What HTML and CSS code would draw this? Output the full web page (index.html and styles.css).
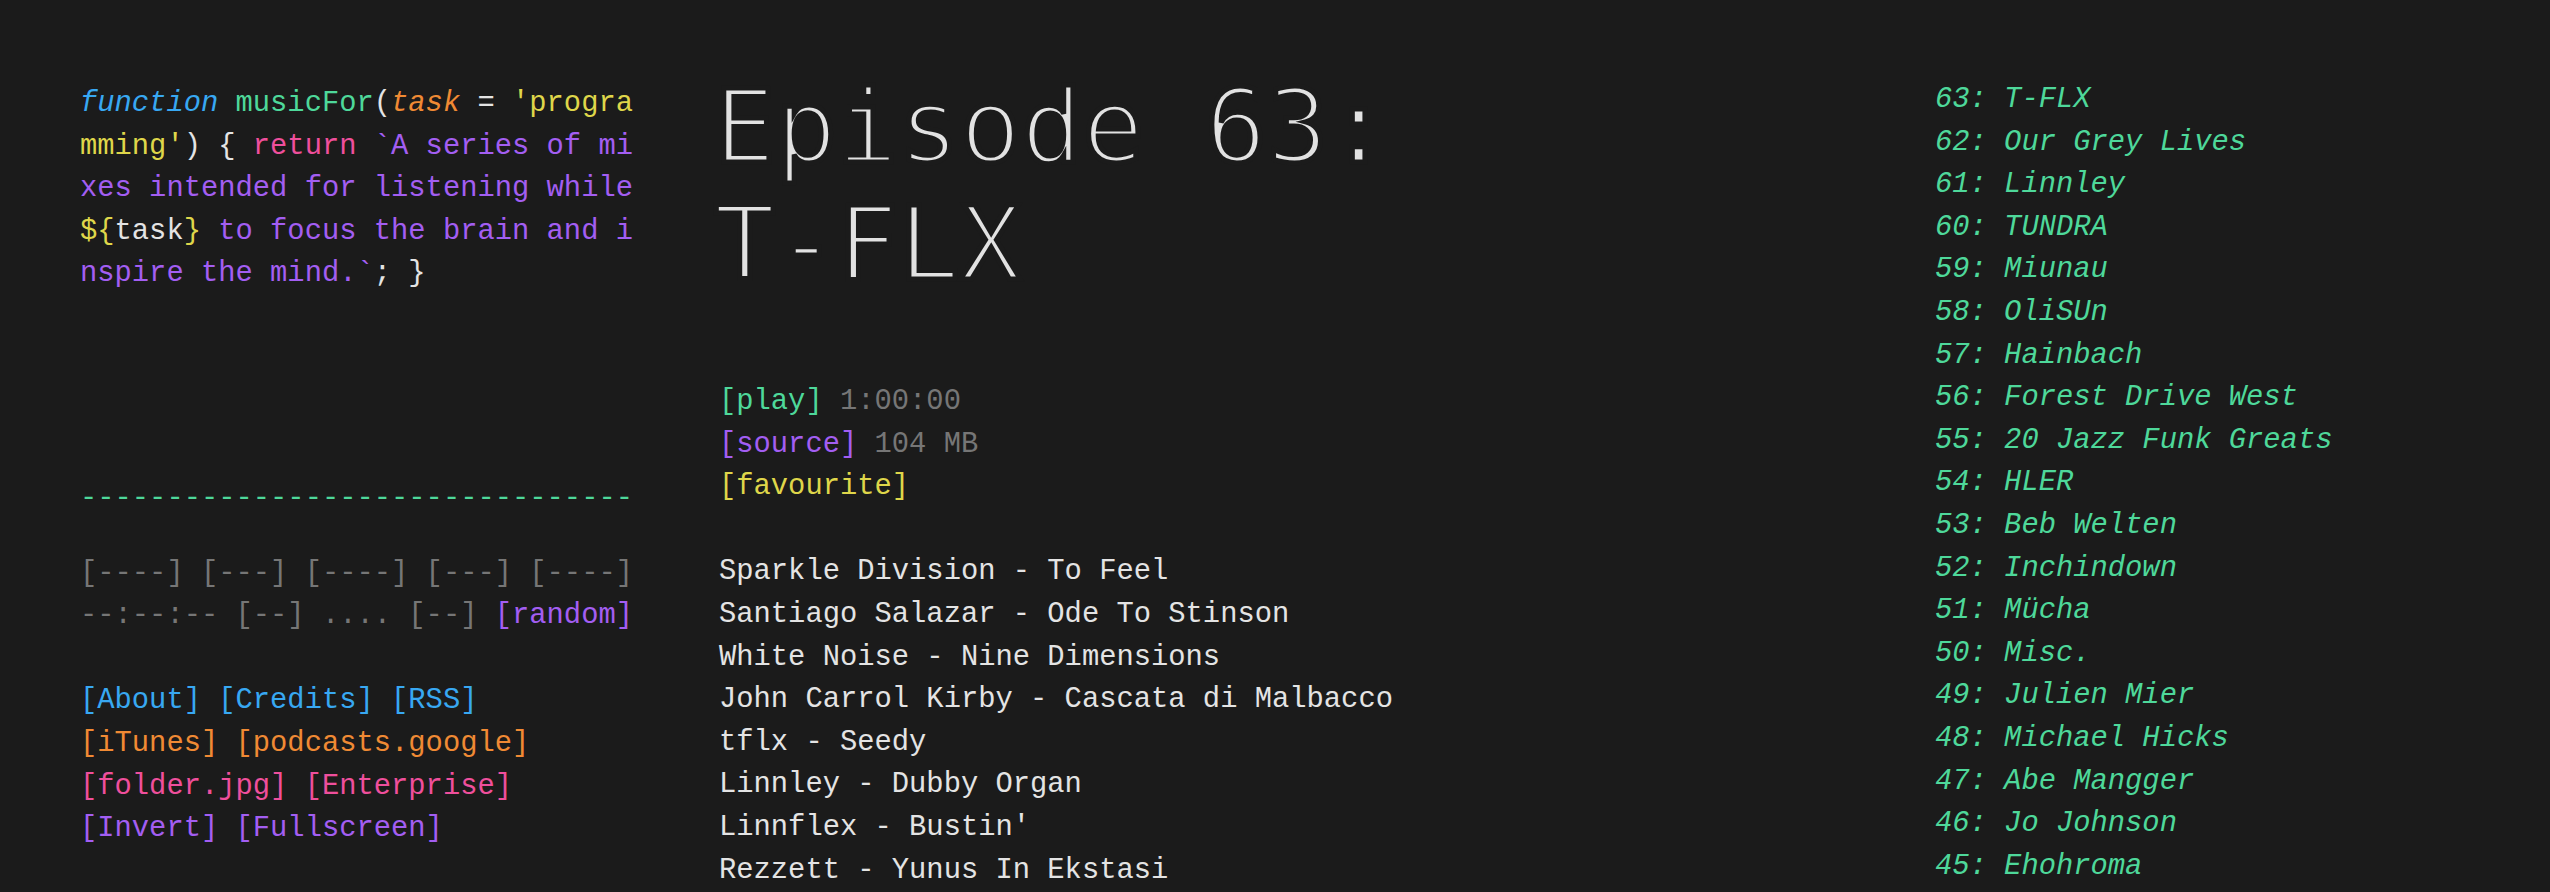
FILE: index.html
```html
<!DOCTYPE html>
<html lang="en">
<head>
<meta charset="utf-8">
<title>Episode 63: T-FLX — musicForProgramming</title>
<link rel="stylesheet" href="styles.css">
</head>
<body>
<div class="page">
  <aside class="left">
    <p class="code"><span class="kw-fn">function</span> <span class="fn">musicFor</span>(<span class="param">task</span> = <span class="str">'programming'</span>) { <span class="ret">return</span> <span class="tpl">`A series of mixes intended for listening while </span><span class="str">${</span>task<span class="str">}</span><span class="tpl"> to focus the brain and inspire the mind.`</span>; }</p>

    <div class="rule">--------------------------------</div>

    <div class="controls">
      <div class="line dim">[----] [---] [----] [---] [----]</div>
      <div class="line"><span class="dim">--:--:-- [--] .... [--]</span> <a class="purple" href="#">[random]</a></div>
    </div>

    <nav class="links">
      <div class="line"><a class="blue" href="#">[About]</a> <a class="blue" href="#">[Credits]</a> <a class="blue" href="#">[RSS]</a></div>
      <div class="line"><a class="orange" href="#">[iTunes]</a> <a class="orange" href="#">[podcasts.google]</a></div>
      <div class="line"><a class="pink" href="#">[folder.jpg]</a> <a class="pink" href="#">[Enterprise]</a></div>
      <div class="line"><a class="purple" href="#">[Invert]</a> <a class="purple" href="#">[Fullscreen]</a></div>
    </nav>
  </aside>

  <main class="middle">
    <h1 class="title">Episode 63: T-FLX</h1>

    <div class="meta">
      <div class="line"><a class="green" href="#">[play]</a> <span class="dim">1:00:00</span></div>
      <div class="line"><a class="purple" href="#">[source]</a> <span class="dim">104 MB</span></div>
      <div class="line"><a class="yellow" href="#">[favourite]</a></div>
    </div>

    <ul class="tracks">
      <li>Sparkle Division - To Feel</li>
      <li>Santiago Salazar - Ode To Stinson</li>
      <li>White Noise - Nine Dimensions</li>
      <li>John Carrol Kirby - Cascata di Malbacco</li>
      <li>tflx - Seedy</li>
      <li>Linnley - Dubby Organ</li>
      <li>Linnflex - Bustin'</li>
      <li>Rezzett - Yunus In Ekstasi</li>
    </ul>
  </main>

  <nav class="right">
    <ul class="episodes">
      <li><a href="#">63: T-FLX</a></li>
      <li><a href="#">62: Our Grey Lives</a></li>
      <li><a href="#">61: Linnley</a></li>
      <li><a href="#">60: TUNDRA</a></li>
      <li><a href="#">59: Miunau</a></li>
      <li><a href="#">58: OliSUn</a></li>
      <li><a href="#">57: Hainbach</a></li>
      <li><a href="#">56: Forest Drive West</a></li>
      <li><a href="#">55: 20 Jazz Funk Greats</a></li>
      <li><a href="#">54: HLER</a></li>
      <li><a href="#">53: Beb Welten</a></li>
      <li><a href="#">52: Inchindown</a></li>
      <li><a href="#">51: Mücha</a></li>
      <li><a href="#">50: Misc.</a></li>
      <li><a href="#">49: Julien Mier</a></li>
      <li><a href="#">48: Michael Hicks</a></li>
      <li><a href="#">47: Abe Mangger</a></li>
      <li><a href="#">46: Jo Johnson</a></li>
      <li><a href="#">45: Ehohroma</a></li>
    </ul>
  </nav>
</div>
</body>
</html>
```

FILE: styles.css
```css
html, body {
  margin: 0;
  padding: 0;
  background: #1b1b1b;
}

body {
  color: #e4e4e4;
  font-family: "Liberation Mono", "DejaVu Sans Mono", monospace;
  font-size: 28.8px;
  line-height: 42.6px;
  overflow: hidden;
}

a {
  text-decoration: none;
  color: inherit;
}

p, ul, h1 {
  margin: 0;
  padding: 0;
}

ul {
  list-style: none;
}

.line,
.rule,
.tracks li,
.episodes li {
  white-space: pre;
}

.page {
  display: grid;
  grid-template-columns: 553px 1fr 535px;
  column-gap: 86px;
  padding: 78px 80px 0;
}

/* left column */
.code {
  margin-top: 5px;
  width: 32ch;
  word-break: break-all;
  color: #e4e4e4;
}

.kw-fn { color: #38a8f2; font-style: italic; }
.fn { color: #4ed89a; }
.param { color: #f08a34; font-style: italic; }
.str { color: #dfd64a; }
.ret { color: #ef4f9c; }
.tpl { color: #a35ef2; }

.rule {
  margin-top: 182px;
  color: #4ed89a;
}

.controls {
  margin-top: 32px;
}

.links {
  margin-top: 42.6px;
}

.dim { color: #767676; }
.blue { color: #38a8f2; }
.orange { color: #f08a34; }
.pink { color: #ef4f9c; }
.purple { color: #a35ef2; }
.green { color: #4ed89a; }
.yellow { color: #dfd64a; }

/* middle column */
.title {
  max-width: 11ch;
  font-family: "DejaVu Sans Mono", "Liberation Mono", monospace;
  font-size: 102px;
  line-height: 116.5px;
  font-weight: normal;
  color: #e2e2e2;
  -webkit-text-stroke: 5px #1b1b1b;
  margin: -8.6px 0 0 -5px;
}

.meta {
  margin-top: 78.6px;
}

.tracks {
  margin-top: 42.6px;
  color: #e4e4e4;
}

/* right column */
.episodes {
  margin-top: 1px;
  color: #4ed89a;
  font-style: italic;
}
```
